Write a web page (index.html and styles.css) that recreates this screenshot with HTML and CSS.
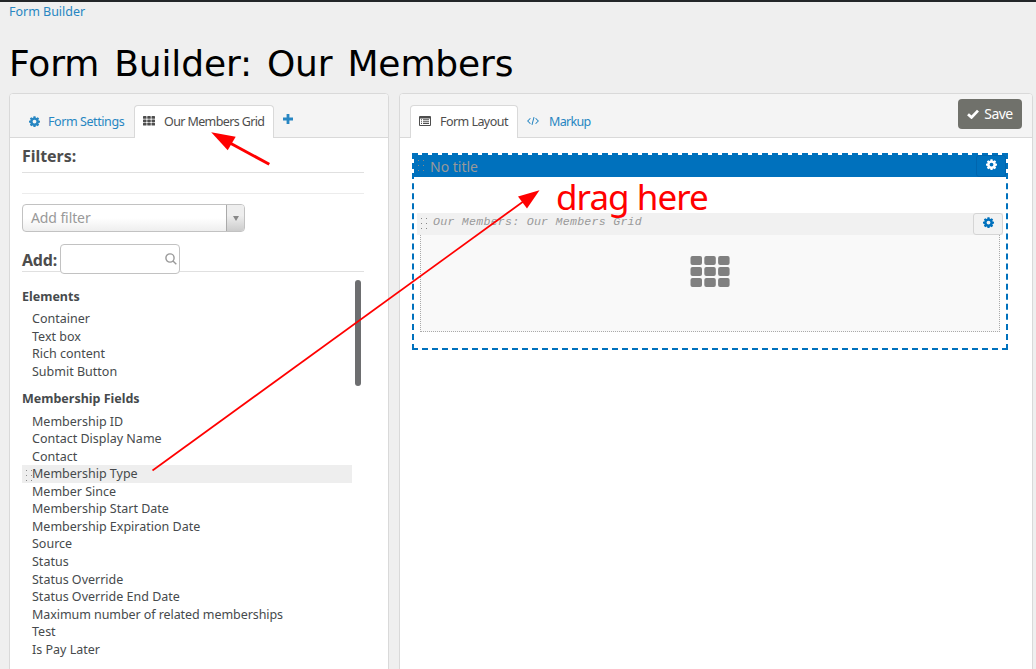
FILE: index.html
```html
<!DOCTYPE html>
<html lang="en">
<head>
<meta charset="utf-8">
<title>Form Builder: Our Members</title>
<link rel="stylesheet" href="styles.css">
</head>
<body>
<svg class="defs" width="0" height="0">
  <symbol id="gear" viewBox="0 0 12 12"><path fill-rule="evenodd" d="M4.9.3h2.2l.3 1.5.8.35 1.3-.85 1.55 1.55-.85 1.25.35.8 1.5.3v1.9l-1.5.4-.35.8.85 1.25L9.5 11.1l-1.3-.85-.8.35-.3 1.4H4.9l-.3-1.4-.8-.35-1.3.85L.95 9.55l.85-1.25-.35-.8L0 7.1V5.2l1.45-.3.35-.8L.95 2.85 2.5 1.3l1.3.85.8-.35zM6 4a2.1 2.1 0 1 0 0 4.2A2.1 2.1 0 0 0 6 4z"/></symbol>
  <symbol id="grid" viewBox="0 0 39 32"><g><rect width="11.5" height="9" rx="2"/><rect x="13.8" width="11.5" height="9" rx="2"/><rect x="27.6" width="11.5" height="9" rx="2"/><rect y="11" width="11.5" height="9" rx="2"/><rect x="13.8" y="11" width="11.5" height="9" rx="2"/><rect x="27.6" y="11" width="11.5" height="9" rx="2"/><rect y="22" width="11.5" height="9" rx="2"/><rect x="13.8" y="22" width="11.5" height="9" rx="2"/><rect x="27.6" y="22" width="11.5" height="9" rx="2"/></g></symbol>
</svg>
<nav class="crumb"><a>Form Builder</a></nav>
<h1 class="title">Form Builder: Our Members</h1>
<main class="panels">
  <section class="panel side">
    <header class="tabs">
      <a class="tab t-settings"><svg class="i-gear"><use href="#gear"/></svg><span>Form Settings</span></a>
      <a class="tab t-grid active"><svg class="i-grid"><use href="#grid"/></svg><span>Our Members Grid</span></a>
      <a class="tab t-add"><svg class="i-plus" viewBox="0 0 10 10"><path d="M3.6 0h2.8v3.6H10v2.8H6.4V10H3.6V6.4H0V3.6h3.6z"/></svg></a>
    </header>
    <div class="side-body">
      <h2 class="label filters">Filters:</h2>
      <div class="rule"></div>
      <div class="select"><span class="ph">Add filter</span><span class="arrow"></span></div>
      <div class="add-row"><h2 class="label">Add:</h2><div class="search"><svg viewBox="0 0 12 12"><circle cx="5" cy="5" r="4.1"/><path d="M8 8l3.3 3.3"/></svg></div></div>
      <div class="list-wrap">
        <div class="lists">
          <h3 class="group">Elements</h3>
          <ul class="items first"><li>Container</li><li>Text box</li><li>Rich content</li><li>Submit Button</li></ul>
          <h3 class="group">Membership Fields</h3>
          <ul class="items"><li>Membership ID</li><li>Contact Display Name</li><li>Contact</li><li class="hover">Membership Type</li><li>Member Since</li><li>Membership Start Date</li><li>Membership Expiration Date</li><li>Source</li><li>Status</li><li>Status Override</li><li>Status Override End Date</li><li class="long">Maximum number of related memberships</li><li>Test</li><li>Is Pay Later</li></ul>
        </div>
        <div class="thumb"></div>
      </div>
    </div>
  </section>
  <section class="panel work">
    <header class="tabs">
      <a class="tab t-layout active"><svg class="i-form" viewBox="0 0 12 10"><path fill-rule="evenodd" d="M1 0h10a1 1 0 0 1 1 1v8a1 1 0 0 1-1 1H1a1 1 0 0 1-1-1V1a1 1 0 0 1 1-1zM1 2.4V9h10V2.4z"/><path d="M2 3.3h1v1H2zM4 3.3h6v1H4zM2 5.2h1v1H2zM4 5.2h6v1H4zM2 7.1h1v1H2zM4 7.1h6v1H4z"/></svg><span>Form Layout</span></a>
      <a class="tab t-markup"><svg class="i-code" viewBox="0 0 13 10"><path d="M3.7 2L.8 5l2.9 3M9.3 2l2.9 3-2.9 3M7.6.8L5.4 9.2"/></svg><span>Markup</span></a>
      <button class="save"><svg viewBox="0 0 12 10"><path d="M1 5.2l3.5 3.2L11 1.6"/></svg><span>Save</span></button>
    </header>
    <div class="work-body">
      <div class="fieldset">
        <div class="bar"><i class="dots"></i><span class="no-title">No title</span><span class="cog white"><svg class="i-gear"><use href="#gear"/></svg></span></div>
        <div class="block">
          <div class="block-bar"><i class="dots"></i><em>Our Members: Our Members Grid</em><span class="cog"><svg class="i-gear"><use href="#gear"/></svg></span></div>
          <div class="preview"><svg class="big-grid"><use href="#grid"/></svg></div>
        </div>
      </div>
    </div>
  </section>
</main>
<svg class="notes" viewBox="0 0 1036 669">
  <path class="thick" d="M269.3 164.3L230 143"/><path class="head" d="M211.2 132.2l24.5 4.5-8 13.5z"/>
  <path class="thin" d="M152.5 470.5L524 201"/><path class="head" d="M539.5 190.3l-21.5 6.2 9 12z"/>
</svg>
<div class="drag">drag here</div>
</body>
</html>
```
FILE: styles.css
```css
* { box-sizing: border-box; }
body { margin: 0; width: 1036px; height: 669px; overflow: hidden; position: relative; background: #efefef; border-top: 2px solid #232629; font-family: "Noto Sans", sans-serif; font-size: 12.5px; color: #464a4c; }
h1, h2, h3, ul { margin: 0; padding: 0; list-style: none; }
svg { display: block; fill: currentColor; flex: none; }
.defs { position: absolute; }
.crumb { height: 20px; padding-left: 9px; line-height: 19px; color: #2786c2; letter-spacing: -.02px; }
.title { height: 71px; padding: 20px 0 0 9px; font: 400 36px/44px "DejaVu Sans", sans-serif; letter-spacing: -.12px; word-spacing: 3.6px; color: #000; white-space: nowrap; }
.panels { display: flex; gap: 10px; padding-left: 9px; }
.panel { height: 600px; border: 1px solid #d9d9d9; border-radius: 4px; background: #fff; }
.side { width: 380px; }
.work { width: 634px; }
.tabs { height: 44px; display: flex; align-items: flex-end; background: #f4f4f4; border-bottom: 1px solid #d9d9d9; border-radius: 3px 3px 0 0; }
.tab { height: 33px; display: flex; align-items: center; color: #2786c2; white-space: nowrap; border: 1px solid transparent; border-bottom: 0; letter-spacing: -.42px; }
.active { color: #4d4d4d; background: #fff; border-color: #d9d9d9; border-radius: 4px 4px 0 0; margin-bottom: -1px; padding-bottom: 2px; }
.t-settings { width: 124px; padding-left: 18px; gap: 8px; }
.t-grid { width: 140px; padding-left: 8px; gap: 9px; letter-spacing: -.62px; }
.t-add { padding: 0 0 5px 8px; }
.t-layout { width: 108px; margin-left: 10px; padding-left: 8px; gap: 9px; letter-spacing: -.55px; }
.t-markup { padding-left: 8px; gap: 10px; flex: 1; letter-spacing: -.7px; }
.i-gear { width: 11px; height: 11px; }
.i-grid { width: 12px; height: 10px; }
.i-plus { width: 10px; height: 10px; }
.i-form { width: 12px; height: 10px; }
.i-code { width: 12px; height: 10px; fill: none; stroke: currentColor; stroke-width: 1.1; }
.save { width: 64px; height: 30px; margin: 0 10px 8px 0; padding: 0 0 1px; border: 0; border-radius: 4px; background: #70716b; color: #fff; display: flex; align-items: center; justify-content: center; gap: 5px; font: 14px "Noto Sans", sans-serif; letter-spacing: -.55px; }
.save svg { width: 12px; height: 10px; fill: none; stroke: #fff; stroke-width: 2.8; }
.side-body { padding: 6px 24px 0 12px; }
.label { font-size: 16px; line-height: 25px; font-weight: 700; color: #4d4d4d; }
.filters { height: 29px; border-bottom: 1px solid #e0e0e0; letter-spacing: -.05px; }
.rule { height: 21px; border-bottom: 1px solid #ececec; }
.select { margin-top: 10px; width: 223px; height: 28px; border: 1px solid #c2c2c2; border-radius: 4px; display: flex; background: linear-gradient(#fff 50%, #eee); overflow: hidden; }
.ph { flex: 1; padding-left: 8px; font-size: 14px; line-height: 25px; color: #999; letter-spacing: -.1px; }
.arrow { width: 18px; border-left: 1px solid #aaa; background: linear-gradient(#eee 40%, #ccc); display: flex; align-items: center; justify-content: center; }
.arrow::after { content: ""; border: 3px solid transparent; border-top: 5px solid #888; border-bottom: 0; }
.add-row { margin-top: 12px; height: 28px; display: flex; gap: 3px; border-bottom: 1px solid #e0e0e0; }
.add-row .label { padding-top: 4px; width: 35px; letter-spacing: -.2px; white-space: nowrap; }
.search { width: 120px; height: 30px; border: 1px solid #c2c2c2; border-radius: 4px; background: #fff; display: flex; justify-content: flex-end; padding: 8px 2px 0 0; }
.search svg { width: 12px; height: 12px; fill: none; stroke: #999; stroke-width: 1.4; }
.list-wrap { padding-top: 8px; display: flex; gap: 3px; width: 340px; }
.lists { width: 330px; }
.thumb { width: 6px; height: 106px; border-radius: 3px; background: #6d6e70; }
.group { font-size: 12.5px; font-weight: 700; line-height: 18px; padding: 8px 0 4px; }
.items { line-height: 17.57px; }
.items li { padding-left: 10px; white-space: nowrap; }
.items .long { letter-spacing: -.07px; }
.first { height: 72px; }
.first + .group { padding-bottom: 4.5px; }
.hover { position: relative; background: #eee; }
.hover::before { content: ""; position: absolute; left: 4px; top: 5px; width: 7px; height: 12px; background: radial-gradient(circle at .5px .5px, #888 .6px, transparent .7px) 0 0 / 5px 5px; }
.work-body { padding: 15px 0 0 12px; }
.fieldset { width: 596px; height: 197px; border: 2px dashed #0071bd; }
.bar { height: 22px; background: #0071bd; display: flex; align-items: center; color: #999; font-size: 14px; }
.dots { width: 6px; height: 12px; margin-left: 4px; background: radial-gradient(circle at .5px .5px, #888 .6px, transparent .7px) 0 0 / 5px 5px; }
.no-title { margin-left: 6px; flex: 1; line-height: 22px; padding-top: 2px; }
.cog { width: 30px; height: 22px; border: 1px solid #d5d5d5; border-radius: 3px; background: #f2f2f2; color: #0071bd; display: flex; justify-content: center; padding: 3px 0 0; }
.cog.white { color: #fff; background: transparent; border-color: #0065ae; }
.block { margin: 36px 3px 0; }
.block-bar { height: 22px; background: #f1f1f1; display: flex; align-items: center; }
.block-bar em { flex: 1; margin: -5px 0 0 6px; font: italic 11.6px/16px "Liberation Mono", monospace; letter-spacing: .25px; color: #999; }
.preview { margin: 0 3px; height: 97px; border: 1px dotted #aaa; border-top: 0; background: #f9f9f9; display: flex; justify-content: center; padding-top: 21px; }
.big-grid { width: 40px; height: 32px; color: #808080; }
.notes { position: absolute; left: 0; top: -2px; width: 1036px; height: 669px; }
.notes .head { fill: red; }
.thin { stroke: red; stroke-width: 1.7; }
.thick { stroke: red; stroke-width: 3; }
.drag { position: absolute; left: 556px; top: 171px; font-size: 35px; line-height: 48px; color: red; white-space: nowrap; letter-spacing: -.95px; }
```
